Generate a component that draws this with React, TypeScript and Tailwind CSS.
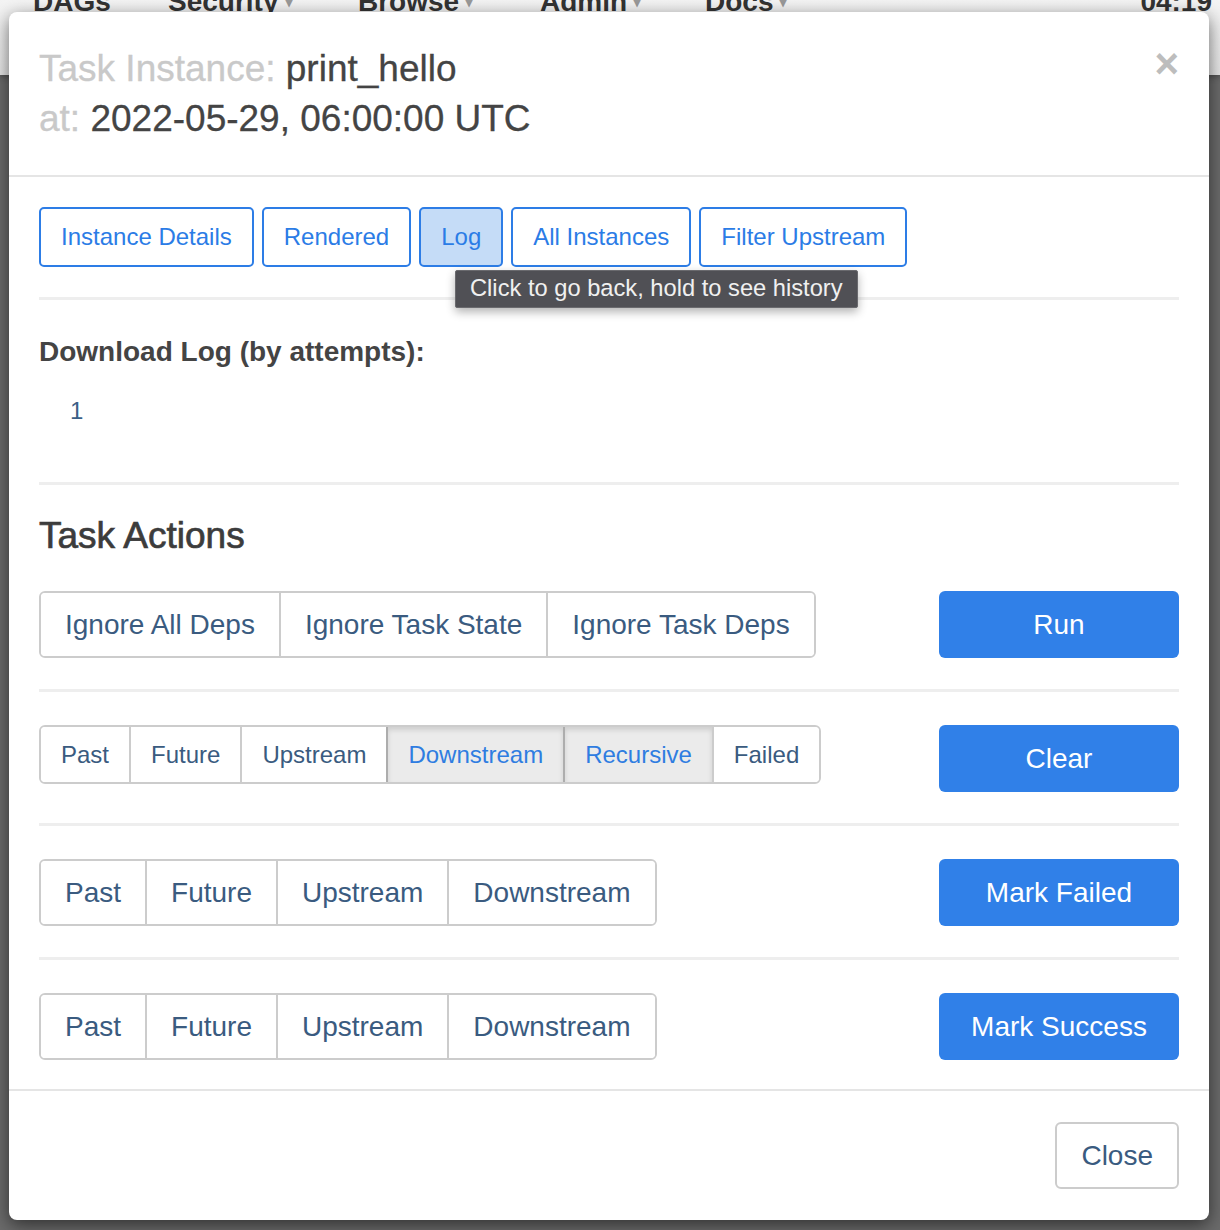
import React from 'react';

const FONT = { fontFamily: '"Liberation Sans", Arial, Helvetica, sans-serif' };

const tabs = ['Instance Details', 'Rendered', 'Log', 'All Instances', 'Filter Upstream'];

type Opt = { label: string; active?: boolean };

// grupo de botones tipo bootstrap (btn-group)
function BtnGroup({ items, size }: { items: Opt[]; size: 'lg' | 'md' }) {
  const dims =
    size === 'lg'
      ? 'h-[63px] text-[28px] px-[24px]'
      : 'h-[55px] text-[24px] px-[20px]';
  return (
    <div className="flex rounded-[6px] border-2 border-[#cccccc] overflow-hidden">
      {items.map((it, i) => (
        <button
          key={it.label}
          className={`${dims} flex items-center leading-none ${i > 0 ? 'border-l-2' : ''} ${
            it.active
              ? 'bg-[#ebebeb] text-[#2f7de1] border-[#adadad] shadow-[inset_0_3px_5px_rgba(0,0,0,0.125)]'
              : 'bg-white text-[#3a5b80] border-[#cccccc]'
          }`}
        >
          {it.label}
        </button>
      ))}
    </div>
  );
}

function PrimaryBtn({ label }: { label: string }) {
  return (
    <button className="w-[240px] h-[67px] rounded-[6px] bg-[#3080e8] text-white text-[28px] leading-none">
      {label}
    </button>
  );
}

function Rule() {
  return <div className="h-[3px] bg-[#eeeeee] mt-[31px] mb-[33px]" />;
}

export default function App() {
  const navItems = [
    { label: 'DAGs', w: 'w-[135px]', caret: false },
    { label: 'Security', w: 'w-[190px]', caret: true },
    { label: 'Browse', w: 'w-[182px]', caret: true },
    { label: 'Admin', w: 'w-[165px]', caret: true },
    { label: 'Docs', w: 'w-[120px]', caret: true },
  ];

  return (
    <div className="relative w-[1220px] h-[1230px] overflow-hidden bg-[#6b6b6b]" style={FONT}>
      {/* página de fondo (navbar) */}
      <div className="h-[75px] bg-gradient-to-b from-[#f4f4f4] to-[#e6e6e6] shadow-[0_2px_6px_rgba(0,0,0,0.3)] overflow-hidden">
        <div className="flex items-start pl-[33px] -mt-[14px] leading-[32px] text-[28px] font-bold text-[#333333]">
          {navItems.map((n) => (
            <span key={n.label} className={`${n.w} shrink-0 flex items-end`}>
              {n.label}
              {n.caret && <span className="ml-[6px] text-[16px] text-[#999]">▾</span>}
            </span>
          ))}
          <span className="ml-auto mr-[8px]">04:19</span>
        </div>
      </div>

      {/* MODAL */}
      <div className="absolute left-[9px] top-[12px] w-[1200px] h-[1208px] bg-white rounded-[8px] shadow-[0_5px_18px_rgba(0,0,0,0.55)] flex flex-col">
        {/* header */}
        <div className="flex justify-between items-start px-[30px] pt-[32px] pb-[31px] border-b-2 border-[#e5e5e5]">
          <div className="text-[37px] leading-[50px] text-[#444444] [-webkit-text-stroke:0.3px_currentColor]">
            <div>
              <span className="text-[#c9c9c9]">Task Instance:</span> print_hello
            </div>
            <div>
              <span className="text-[#c9c9c9]">at:</span> 2022-05-29, 06:00:00 UTC
            </div>
          </div>
          <button className="text-[42px] leading-[40px] font-bold text-[#bdbdbd]">×</button>
        </div>

        {/* body */}
        <div className="flex-1 px-[30px] pt-[30px]">
          <div className="relative flex gap-[8px]">
            {tabs.map((t) => (
              <button
                key={t}
                className={`h-[60px] px-[20px] rounded-[5px] border-2 border-[#2d7de6] text-[24px] leading-none text-[#2b7ce6] ${
                  t === 'Log' ? 'bg-[#c5dcf7]' : 'bg-white'
                }`}
              >
                {t}
              </button>
            ))}
            {/* tooltip nativo */}
            <div className="absolute left-[416px] top-[63px] h-[38px] px-[14px] flex items-center bg-[#505055] text-[#f0f0f0] text-[23.7px] rounded-[2px] border border-[#6a6a6e] shadow-[0_4px_10px_rgba(0,0,0,0.3)] whitespace-nowrap z-10">
              Click to go back, hold to see history
            </div>
          </div>

          <div className="h-[3px] bg-[#eeeeee] mt-[30px] mb-[32px]" />

          <div className="text-[28px] leading-[40px] font-bold text-[#444444]">Download Log (by attempts):</div>
          <div className="pl-[31px] mt-[22px] text-[24px] leading-[34px] text-[#3b5f86]">1</div>

          <div className="h-[3px] bg-[#eeeeee] mt-[54px] mb-[26px]" />

          <div className="text-[37px] leading-[50px] text-[#3c3c3c] [-webkit-text-stroke:0.7px_currentColor]">
            Task Actions
          </div>

          <div className="mt-[30px] flex justify-between items-start">
            <BtnGroup
              size="lg"
              items={[{ label: 'Ignore All Deps' }, { label: 'Ignore Task State' }, { label: 'Ignore Task Deps' }]}
            />
            <PrimaryBtn label="Run" />
          </div>
          <Rule />
          <div className="flex justify-between items-start">
            <BtnGroup
              size="md"
              items={[
                { label: 'Past' },
                { label: 'Future' },
                { label: 'Upstream' },
                { label: 'Downstream', active: true },
                { label: 'Recursive', active: true },
                { label: 'Failed' },
              ]}
            />
            <PrimaryBtn label="Clear" />
          </div>
          <Rule />
          <div className="flex justify-between items-start">
            <BtnGroup
              size="lg"
              items={[{ label: 'Past' }, { label: 'Future' }, { label: 'Upstream' }, { label: 'Downstream' }]}
            />
            <PrimaryBtn label="Mark Failed" />
          </div>
          <Rule />
          <div className="flex justify-between items-start">
            <BtnGroup
              size="lg"
              items={[{ label: 'Past' }, { label: 'Future' }, { label: 'Upstream' }, { label: 'Downstream' }]}
            />
            <PrimaryBtn label="Mark Success" />
          </div>
        </div>

        {/* footer */}
        <div className="border-t-2 border-[#e5e5e5] px-[30px] pt-[31px] pb-[31px] flex justify-end">
          <button className="h-[67px] px-[24px] rounded-[6px] border-2 border-[#cccccc] text-[28px] leading-none text-[#3a5b80] bg-white">
            Close
          </button>
        </div>
      </div>
    </div>
  );
}
